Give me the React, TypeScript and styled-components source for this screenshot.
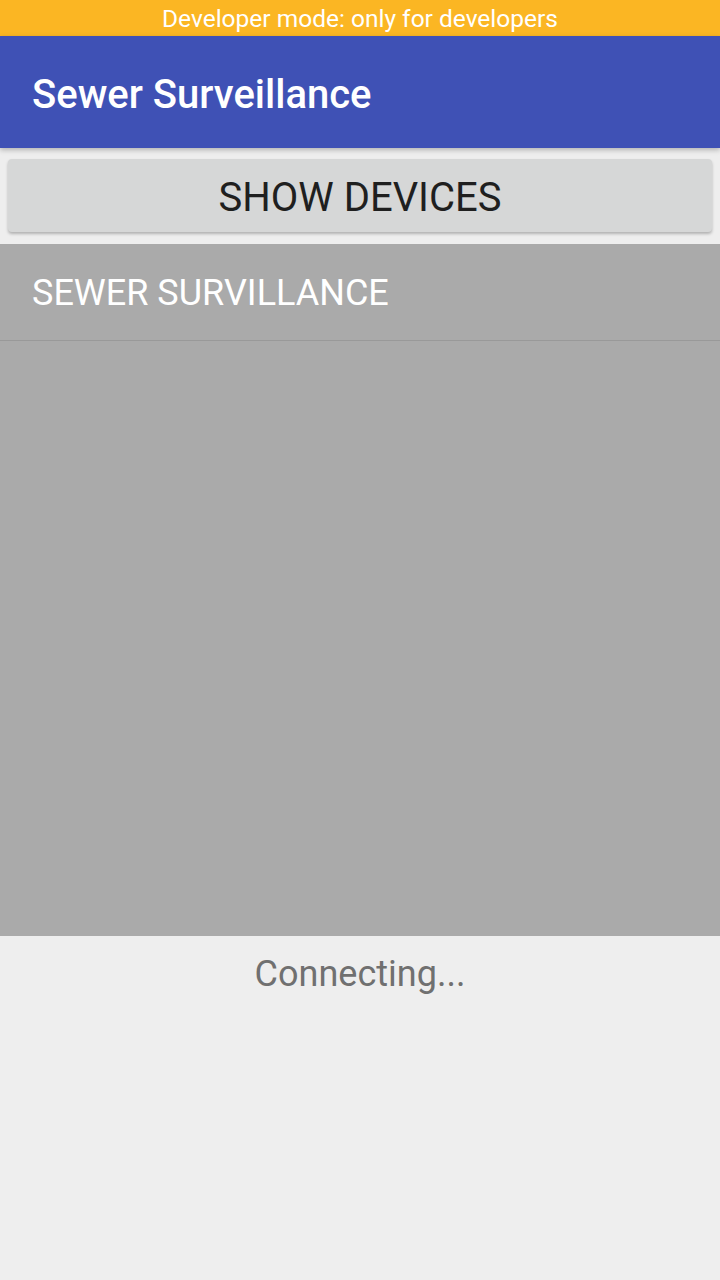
import React from "react";
import styled, { createGlobalStyle } from "styled-components";

const Global = createGlobalStyle`
  html, body { margin: 0; padding: 0; }
  body { background: #eeeeee; font-family: Roboto, "Noto Sans", sans-serif; }
  #root { width: 720px; height: 1280px; }
`;

const Screen = styled.div`
  width: 720px;
  height: 1280px;
  display: flex;
  flex-direction: column;
  background: #eeeeee;
  overflow: hidden;
`;

const StatusBar = styled.div`
  height: 36px;
  box-sizing: border-box;
  padding-top: 3px;
  background: #fbb623;
  color: #ffffff;
  font-size: 24.5px;
  display: flex;
  align-items: center;
  justify-content: center;
  line-height: 1;
`;

const AppBar = styled.header`
  height: 112px;
  box-sizing: border-box;
  padding: 4px 0 0 32px;
  background: #3f51b5;
  color: #ffffff;
  display: flex;
  align-items: center;
  font-size: 40px;
  font-weight: 500;
  box-shadow: 0 2px 5px rgba(0, 0, 0, 0.25);
  position: relative;
  z-index: 1;
`;

const ButtonWrap = styled.div`
  padding: 11px 8px 12px;
`;

const Button = styled.button`
  width: 100%;
  height: 73px;
  border: none;
  border-radius: 4px;
  background: #d6d7d7;
  color: #1f1f1f;
  font-family: Roboto, sans-serif;
  font-size: 40px;
  box-shadow: 0 2px 3px rgba(0, 0, 0, 0.25);
  padding: 4px 0 0;
`;

const List = styled.div`
  height: 692px;
  background: #aaaaaa;
  display: flex;
  flex-direction: column;
`;

const ListItem = styled.div`
  height: 97px;
  box-sizing: border-box;
  border-bottom: 1px solid #999999;
  display: flex;
  align-items: center;
  padding: 2px 0 0 32px;
  color: #ffffff;
  font-size: 36px;
`;

const Status = styled.div`
  text-align: center;
  color: #707070;
  font-size: 36px;
  padding-top: 17px;
`;

export default function App() {
  return (
    <Screen>
      <Global />
      <StatusBar>Developer mode: only for developers</StatusBar>
      <AppBar>Sewer Surveillance</AppBar>
      <ButtonWrap>
        <Button>SHOW DEVICES</Button>
      </ButtonWrap>
      <List>
        <ListItem>SEWER SURVILLANCE</ListItem>
      </List>
      <Status>Connecting...</Status>
    </Screen>
  );
}
